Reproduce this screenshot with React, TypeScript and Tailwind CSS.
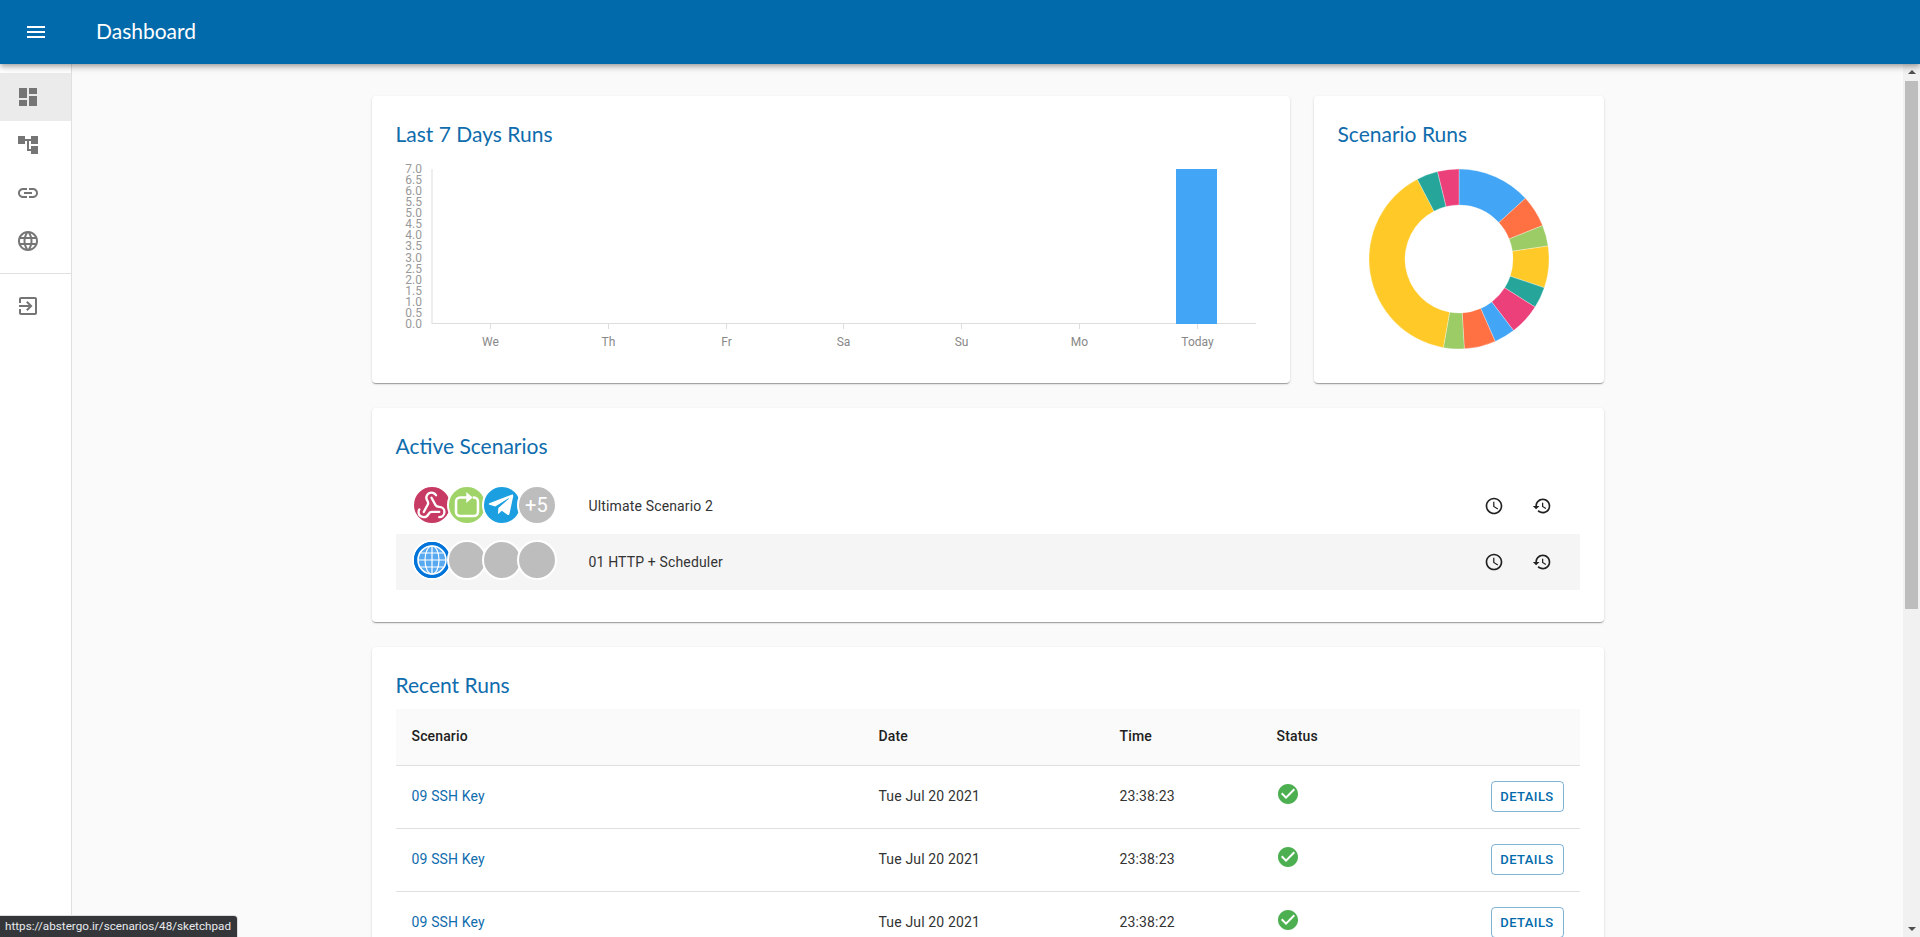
import React from 'react';
import { Webhook } from 'lucide-react';
import { FaTelegramPlane } from 'react-icons/fa';

const icons = {
  menu: 'M3 18h18v-2H3v2zm0-5h18v-2H3v2zm0-7v2h18V6H3z',
  dashboard: 'M3 13h8V3H3v10zm0 8h8v-6H3v6zm10 0h8V11h-8v10zm0-18v6h8V3h-8z',
  tree: 'M22 11V3h-7v3H9V3H2v8h7V8h2v10h4v3h7v-8h-7v3h-2V8h2v3h7z',
  link: 'M3.9 12c0-1.71 1.39-3.1 3.1-3.1h4V7H7c-2.76 0-5 2.24-5 5s2.24 5 5 5h4v-1.9H7c-1.71 0-3.1-1.39-3.1-3.1zM8 13h8v-2H8v2zm9-6h-4v1.9h4c1.71 0 3.1 1.39 3.1 3.1s-1.39 3.1-3.1 3.1h-4V17h4c2.76 0 5-2.24 5-5s-2.24-5-5-5z',
  language: 'M11.99 2C6.47 2 2 6.48 2 12s4.47 10 9.99 10C17.52 22 22 17.52 22 12S17.52 2 11.99 2zm6.93 6h-2.95c-.32-1.25-.78-2.45-1.38-3.56 1.84.63 3.37 1.91 4.33 3.56zM12 4.04c.83 1.2 1.48 2.53 1.91 3.96h-3.82c.43-1.43 1.08-2.76 1.91-3.96zM4.26 14C4.1 13.36 4 12.69 4 12s.1-1.36.26-2h3.38c-.08.66-.14 1.32-.14 2 0 .68.06 1.34.14 2H4.26zm.82 2h2.95c.32 1.25.78 2.45 1.38 3.56-1.84-.63-3.37-1.9-4.33-3.56zm2.95-8H5.08c.96-1.66 2.49-2.93 4.33-3.56C8.81 5.55 8.35 6.75 8.03 8zM12 19.96c-.83-1.2-1.48-2.53-1.91-3.96h3.82c-.43 1.43-1.08 2.76-1.91 3.96zM14.34 14H9.66c-.09-.66-.16-1.32-.16-2 0-.68.07-1.35.16-2h4.68c.09.65.16 1.32.16 2 0 .68-.07 1.34-.16 2zm.25 5.56c.6-1.11 1.06-2.31 1.38-3.56h2.95c-.96 1.65-2.49 2.93-4.33 3.56zM16.36 14c.08-.66.14-1.32.14-2 0-.68-.06-1.34-.14-2h3.38c.16.64.26 1.31.26 2s-.1 1.36-.26 2h-3.38z',
  exit: 'M10.09 15.59L11.5 17l5-5-5-5-1.41 1.41L12.67 11H3v2h9.67l-2.58 2.59zM19 3H5c-1.11 0-2 .9-2 2v4h2V5h14v14H5v-4H3v4c0 1.1.89 2 2 2h14c1.1 0 2-.9 2-2V5c0-1.1-.9-2-2-2z',
  clock: 'M11.99 2C6.47 2 2 6.48 2 12s4.47 10 9.99 10C17.52 22 22 17.52 22 12S17.52 2 11.99 2zM12 20c-4.42 0-8-3.58-8-8s3.58-8 8-8 8 3.58 8 8-3.58 8-8 8zM12.5 7H11v6l5.25 3.15.75-1.23-4.5-2.67z',
  history: 'M13 3c-4.97 0-9 4.03-9 9H1l3.89 3.89.07.14L9 12H6c0-3.87 3.13-7 7-7s7 3.13 7 7-3.13 7-7 7c-1.93 0-3.68-.79-4.94-2.06l-1.42 1.42C8.27 19.99 10.51 21 13 21c4.97 0 9-4.03 9-9s-4.03-9-9-9zm-1 5v5l4.28 2.54.72-1.21-3.5-2.08V8H12z',
  check: 'M12 2C6.48 2 2 6.48 2 12s4.48 10 10 10 10-4.48 10-10S17.52 2 12 2zm-2 15l-5-5 1.41-1.41L10 14.17l7.59-7.59L19 8l-9 9z',
};

const Icon: React.FC<{ d: string; className?: string }> = ({ d, className }) => (
  <svg viewBox="0 0 24 24" className={className} fill="currentColor">
    <path d={d} />
  </svg>
);

const Card: React.FC<{ title: string; className?: string; children: React.ReactNode }> = ({ title, className = '', children }) => (
  <section className={`bg-white rounded-[4px] p-6 shadow-[0_2px_1px_-1px_rgba(0,0,0,0.2),0_1px_1px_0_rgba(0,0,0,0.14),0_1px_3px_0_rgba(0,0,0,0.12)] ${className}`}>
    <h2 className="font-['Lato',sans-serif] text-[21px] leading-7 font-normal text-[#0f6cad]">{title}</h2>
    {children}
  </section>
);

const NavItem: React.FC<{ d: string; active?: boolean }> = ({ d, active }) => (
  <div className={`h-12 flex items-center pl-4 ${active ? 'bg-[#ebebeb]' : ''}`}>
    <Icon d={d} className="w-6 h-6 text-[#757575]" />
  </div>
);

const days = ['We', 'Th', 'Fr', 'Sa', 'Su', 'Mo', 'Today'];
const ticks = ['7.0', '6.5', '6.0', '5.5', '5.0', '4.5', '4.0', '3.5', '3.0', '2.5', '2.0', '1.5', '1.0', '0.5', '0.0'];

const BarChart = () => (
  <svg width="870" height="195" className="mt-3 block font-['Roboto',sans-serif]">
    {ticks.map((t, i) => (
      <text key={t} x="26" y={9 + i * 11.07} textAnchor="end" dominantBaseline="central" fontSize="12" fill="#999">
        {t}
      </text>
    ))}
    <rect x="35" y="9" width="2" height="155" fill="#eeeeee" />
    <rect x="36" y="163" width="824" height="1" fill="#dddddd" />
    {days.map((day, i) => {
      const x = Math.round(94 + i * 117.8);
      return (
        <g key={day}>
          <rect x={x} y="164" width="1" height="5" fill="#dddddd" />
          <text x={x + 0.5} y="182" textAnchor="middle" dominantBaseline="central" fontSize="12" fill="#888">
            {day}
          </text>
        </g>
      );
    })}
    <rect x="780" y="9" width="41" height="155" fill="#42a5f5" />
  </svg>
);

const segments: [number, string][] = [
  [47.6, '#42a5f5'],
  [68.2, '#ff7043'],
  [81.7, '#9ccc65'],
  [108.6, '#ffca28'],
  [122.3, '#26a69a'],
  [142.7, '#ec407a'],
  [156.3, '#42a5f5'],
  [176.6, '#ff7043'],
  [190, '#9ccc65'],
  [332.4, '#ffca28'],
  [346.2, '#26a69a'],
  [360, '#ec407a'],
];

const point = (r: number, deg: number) => {
  const a = (deg * Math.PI) / 180;
  return `${(90 + r * Math.sin(a)).toFixed(2)} ${(90 - r * Math.cos(a)).toFixed(2)}`;
};

const Donut = () => (
  <svg width="180" height="180" className="block mx-auto mt-[21px]">
    {segments.map(([end, color], i) => {
      const start = i === 0 ? 0 : segments[i - 1][0];
      const large = end - start > 180 ? 1 : 0;
      const d = `M${point(90, start)}A90 90 0 ${large} 1 ${point(90, end)}L${point(54, end)}A54 54 0 ${large} 0 ${point(54, start)}Z`;
      return <path key={i} d={d} fill={color} stroke="#ffffff" strokeWidth="0.3" />;
    })}
  </svg>
);

const Avatar: React.FC<{ className: string; children?: React.ReactNode }> = ({ className, children }) => (
  <div className={`w-10 h-10 rounded-full border-2 border-white flex items-center justify-center -ml-[5px] last:ml-0 ${className}`}>
    {children}
  </div>
);

const LoopIcon = () => (
  <svg width="30" height="30" viewBox="0 0 26 26" fill="none" stroke="#ffffff" strokeWidth="2.2">
    <path d="M13 6.5H7a3.5 3.5 0 0 0-3.5 3.5v9A3.5 3.5 0 0 0 7 22.5h12a3.5 3.5 0 0 0 3.5-3.5v-9A3.5 3.5 0 0 0 19 6.5h-1" />
    <path d="M13 3l4 3.5-4 3.5z" fill="#ffffff" strokeWidth="1.2" />
  </svg>
);

const GlobeIcon = () => (
  <svg width="36" height="36" viewBox="0 0 36 36" fill="none">
    <circle cx="18" cy="18" r="18" fill="#0074d9" />
    <circle cx="18" cy="18" r="14" fill="#58a9f0" stroke="#ffffff" strokeWidth="1.6" />
    <g stroke="#ffffff" strokeWidth="1.2">
      <ellipse cx="18" cy="18" rx="7" ry="14" />
      <path d="M18 4v28M4 18h28M6.5 11h23M6.5 25h23" />
    </g>
  </svg>
);

const Scenario: React.FC<{ name: string; shaded?: boolean; avatars: React.ReactNode }> = ({ name, shaded, avatars }) => (
  <div className={`h-14 flex items-center text-[14px] tracking-[0.15px] text-[#333333] ${shaded ? 'bg-[#f5f5f5]' : ''}`}>
    <div className="w-[193px] pl-4">
      <div className="inline-flex flex-row-reverse">{avatars}</div>
    </div>
    <div className="flex-1">{name}</div>
    <div className="w-12 flex justify-center">
      <Icon d={icons.clock} className="w-5 h-5 text-[#212121]" />
    </div>
    <div className="w-12 flex justify-center mr-[14px]">
      <Icon d={icons.history} className="w-5 h-5 text-[#212121]" />
    </div>
  </div>
);

const runs = [
  { date: 'Tue Jul 20 2021', time: '23:38:23' },
  { date: 'Tue Jul 20 2021', time: '23:38:23' },
  { date: 'Tue Jul 20 2021', time: '23:38:22' },
];

const Th: React.FC<{ children?: React.ReactNode; className?: string }> = ({ children, className = '' }) => (
  <th className={`h-14 px-4 text-left font-medium text-[14px] tracking-[0.15px] text-[#212121] border-b border-[#e0e0e0] ${className}`}>{children}</th>
);

export default function App() {
  return (
    <div className="h-screen flex flex-col overflow-hidden bg-[#fafafa] font-['Roboto',sans-serif]">
      <header className="relative z-10 h-16 shrink-0 flex items-center bg-[#016aab] text-white shadow-[0_2px_4px_-1px_rgba(0,0,0,0.2),0_4px_5px_0_rgba(0,0,0,0.14),0_1px_10px_0_rgba(0,0,0,0.12)]">
        <Icon d={icons.menu} className="w-6 h-6 ml-6" />
        <h1 className="ml-[48px] -mt-0.5 font-['Lato',sans-serif] text-[21px] font-normal">Dashboard</h1>
      </header>

      <div className="flex-1 flex min-h-0">
        <aside className="w-[72px] shrink-0 bg-white border-r border-[#e0e0e0] pt-[9px]">
          <NavItem d={icons.dashboard} active />
          <NavItem d={icons.tree} />
          <NavItem d={icons.link} />
          <NavItem d={icons.language} />
          <div className="mt-2 mb-2 h-px bg-[#e0e0e0]" />
          <NavItem d={icons.exit} />
        </aside>

        <main className="flex-1 min-w-0 overflow-hidden pt-8">
          <div className="w-[1232px] mx-auto flex flex-col gap-[25px] pb-6">
            <div className="flex gap-6">
              <Card title="Last 7 Days Runs" className="w-[918px] h-[287px]">
                <BarChart />
              </Card>
              <Card title="Scenario Runs" className="flex-1 h-[287px]">
                <Donut />
              </Card>
            </div>

            <Card title="Active Scenarios" className="pb-8">
              <div className="mt-[18px]">
                <Scenario
                  name="Ultimate Scenario 2"
                  avatars={
                    <>
                      <Avatar className="bg-[#bdbdbd] text-white text-[20px]">+5</Avatar>
                      <Avatar className="bg-[#1b9fe0] text-white"><FaTelegramPlane size={28} className="-ml-0.5" /></Avatar>
                      <Avatar className="bg-[#a0d468]"><LoopIcon /></Avatar>
                      <Avatar className="bg-[#c73a63] text-white"><Webhook size={31} strokeWidth={1.8} /></Avatar>
                    </>
                  }
                />
                <Scenario
                  name="01 HTTP + Scheduler"
                  shaded
                  avatars={
                    <>
                      <Avatar className="bg-[#bdbdbd]" />
                      <Avatar className="bg-[#bdbdbd]" />
                      <Avatar className="bg-[#bdbdbd]" />
                      <Avatar className="bg-[#0074d9]"><GlobeIcon /></Avatar>
                    </>
                  }
                />
              </div>
            </Card>

            <Card title="Recent Runs">
              <table className="mt-2.5 w-full table-fixed border-collapse">
                <thead className="bg-[#fafafa]">
                  <tr>
                    <Th className="w-[467px]">Scenario</Th>
                    <Th className="w-[241px]">Date</Th>
                    <Th className="w-[157px]">Time</Th>
                    <Th className="w-[150px]">Status</Th>
                    <Th />
                  </tr>
                </thead>
                <tbody className="text-[14px] tracking-[0.15px] text-[#333333]">
                  {runs.map((run, i) => (
                    <tr key={i} className="border-b border-[#e0e0e0]">
                      <td className="px-4 text-[#0f6cad]">09 SSH Key</td>
                      <td className="px-4">{run.date}</td>
                      <td className="px-4">{run.time}</td>
                      <td className="px-4">
                        <Icon d={icons.check} className="w-6 h-6 text-[#4caf50] -mt-1.5 -ml-px" />
                      </td>
                      <td className="px-4 py-[15.5px] text-right">
                        <button className="h-[31px] w-[73px] rounded-[4px] border border-[#016aab]/50 text-[#016aab] text-[13px] font-medium tracking-[0.4px]">
                          DETAILS
                        </button>
                      </td>
                    </tr>
                  ))}
                </tbody>
              </table>
            </Card>
          </div>
        </main>

        {/* page scrollbar */}
        <div className="w-[17px] shrink-0 bg-[#f1f1f1] flex flex-col items-center pb-[6px]">
          <div className="mt-[6px] w-0 h-0 border-x-[4px] border-x-transparent border-b-[4px] border-b-[#505050]" />
          <div className="mt-[7px] w-[13px] h-[528px] bg-[#bdbdbd]" />
          <div className="mt-auto w-0 h-0 border-x-[4px] border-x-transparent border-t-[4px] border-t-[#505050]" />
        </div>
      </div>

      {/* browser link preview */}
      <div className="absolute left-0 bottom-0 z-20 h-[21px] w-[237px] flex items-center pl-[5px] bg-[#35363a] rounded-tr-[3px] text-[#e8eaed] text-[11.7px] whitespace-nowrap font-['Roboto',sans-serif] shadow-[0_-1px_0_0_#dcdcdc,1px_0_0_0_#dcdcdc]">
        https://abstergo.ir/scenarios/48/sketchpad
      </div>
    </div>
  );
}
